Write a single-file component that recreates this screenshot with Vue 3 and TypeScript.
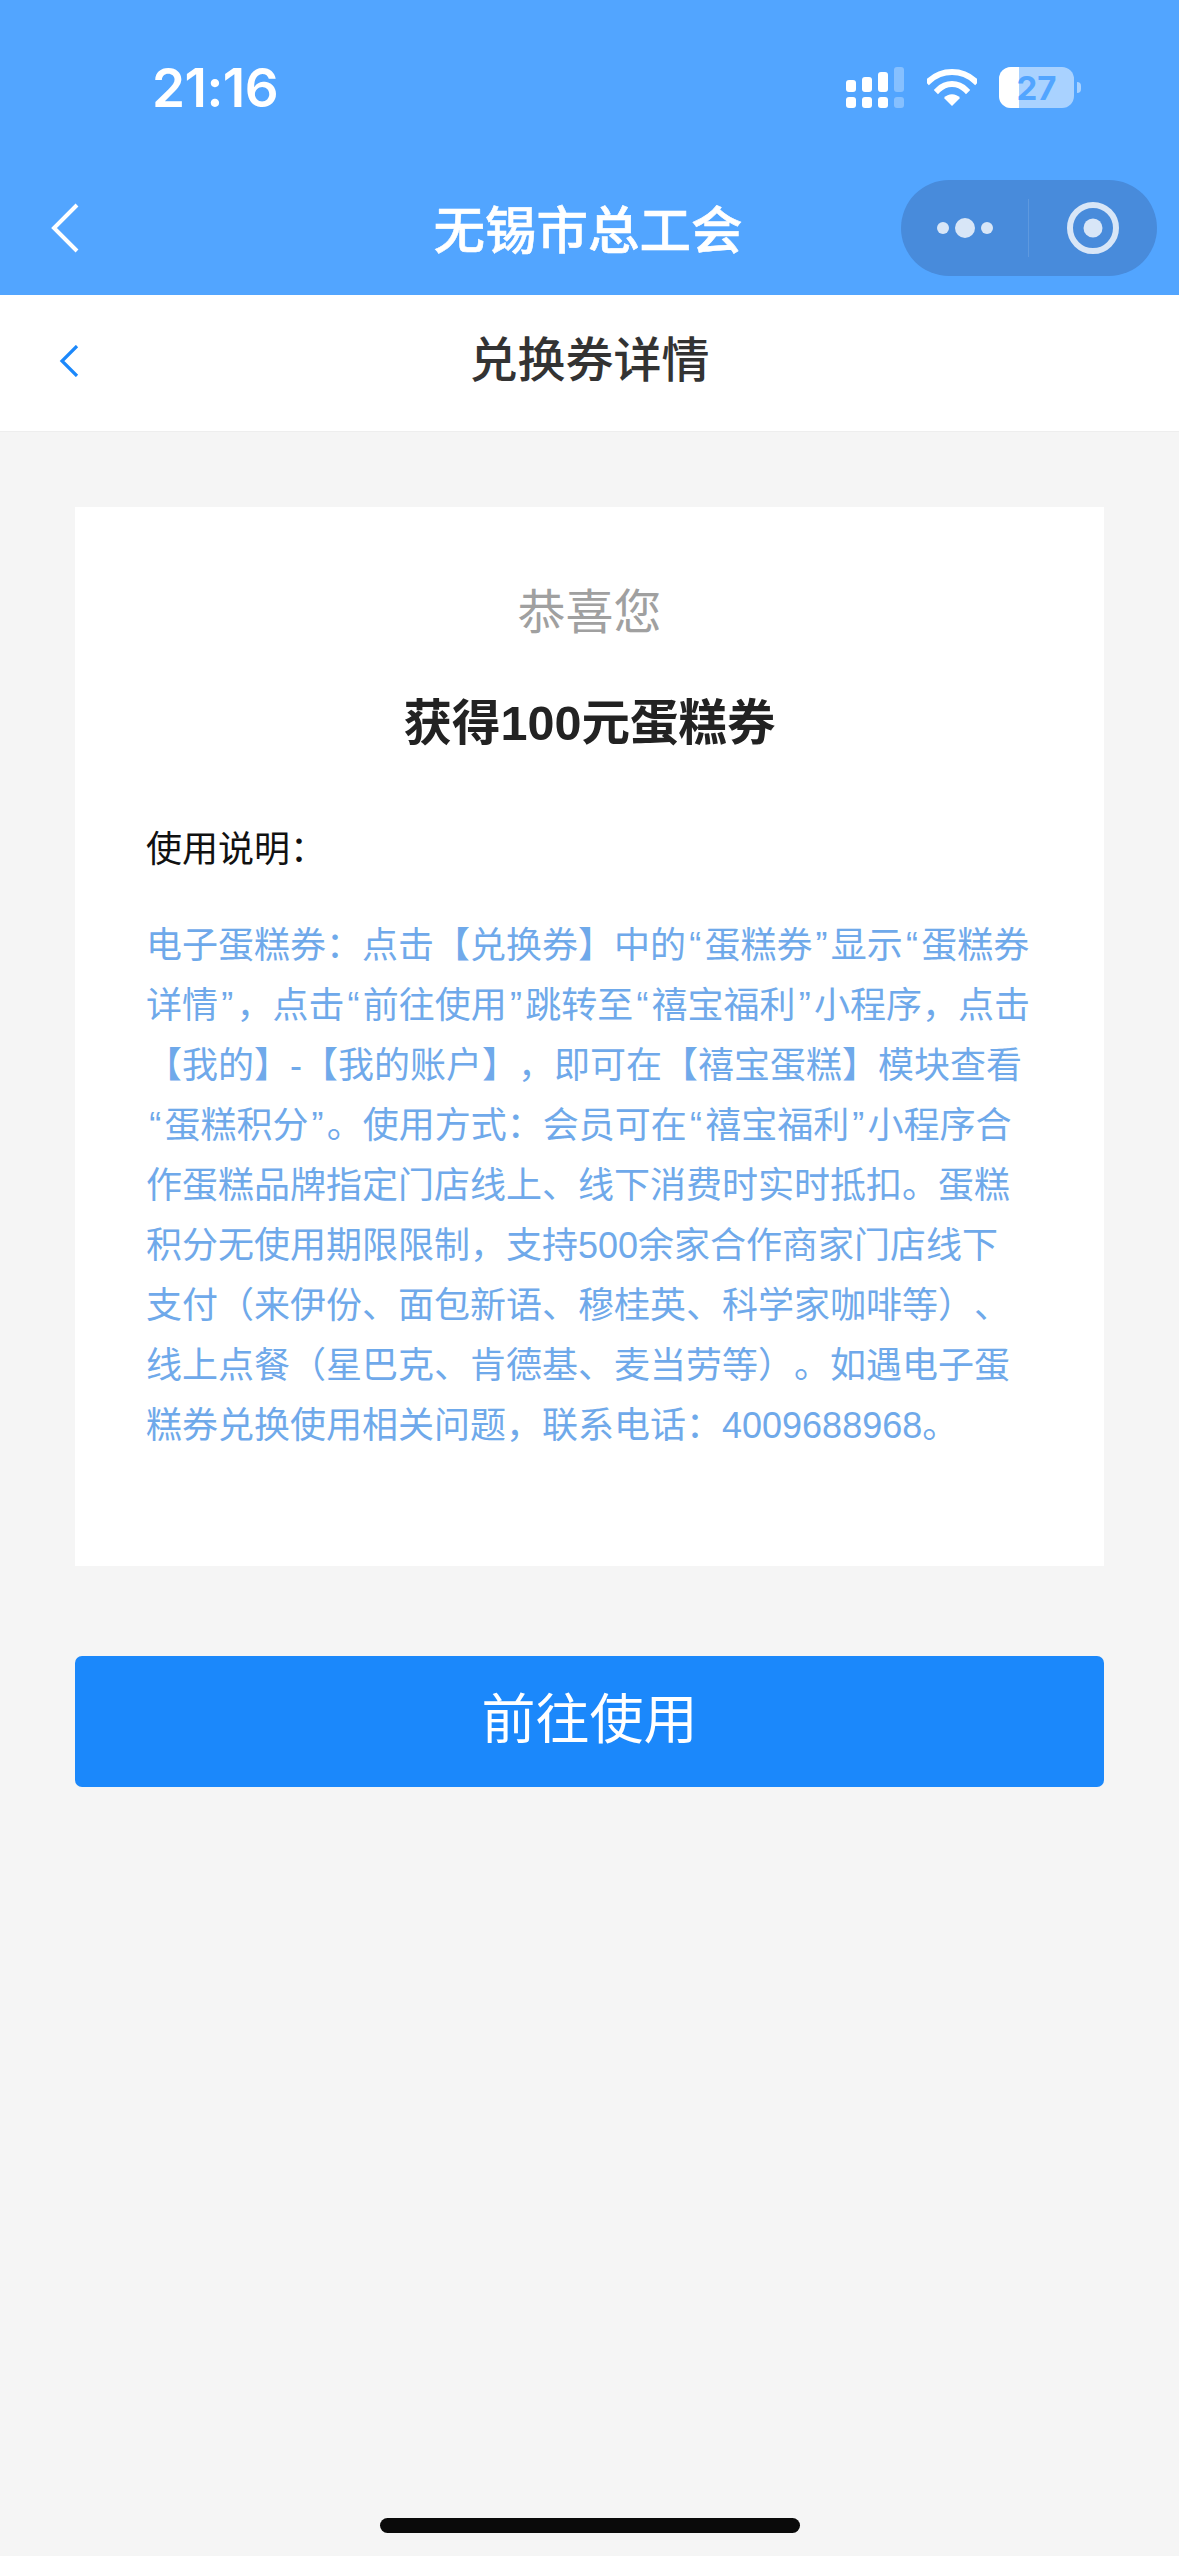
<script setup lang="ts">
const lines: string[] = [
  '电子蛋糕券：点击【兑换券】中的“蛋糕券”显示“蛋糕券',
  '详情”，点击“前往使用”跳转至“禧宝福利”小程序，点击',
  '【我的】-【我的账户】，即可在【禧宝蛋糕】模块查看',
  '“蛋糕积分”。使用方式：会员可在“禧宝福利”小程序合',
  '作蛋糕品牌指定门店线上、线下消费时实时抵扣。蛋糕',
  '积分无使用期限限制，支持500余家合作商家门店线下',
  '支付（来伊份、面包新语、穆桂英、科学家咖啡等）、',
  '线上点餐（星巴克、肯德基、麦当劳等）。如遇电子蛋',
  '糕券兑换使用相关问题，联系电话：4009688968。',
]
const parts = (line: string): string[] => line.split(/([“”])/).filter((p) => p !== '')
const isQuote = (part: string): boolean => part === '“' || part === '”'
</script>

<template>
  <div class="page" lang="zh-CN">
    <header class="top">
      <div class="status">
        <span class="time">21:16</span>
        <div class="status-icons">
          <svg class="signal" width="56" height="41" viewBox="0 0 56 41">
            <g fill="#fff">
              <rect x="0" y="13" width="10" height="12" rx="3" />
              <rect x="16" y="10" width="10" height="15" rx="3" />
              <rect x="32" y="5" width="10" height="20" rx="3" />
              <rect x="0" y="30" width="10" height="11" rx="3" />
              <rect x="16" y="30" width="10" height="11" rx="3" />
              <rect x="32" y="30" width="10" height="11" rx="3" />
            </g>
            <g fill="#fff" opacity="0.3">
              <rect x="48" y="0" width="10" height="25" rx="3" />
              <rect x="48" y="30" width="10" height="11" rx="3" />
            </g>
          </svg>
          <svg class="wifi" width="50" height="37" viewBox="0 0 50 37">
            <path d="M2 12 C15 0 35 0 48 12" fill="none" stroke="#fff" stroke-width="6" stroke-linecap="square" />
            <path d="M11 21 C19 13 31 13 39 21" fill="none" stroke="#fff" stroke-width="6" stroke-linecap="square" />
            <path d="M17 29 C21 24 29 24 33 29 L25 37 Z" fill="#fff" />
          </svg>
          <div class="battery">
            <div class="battery-body">
              <div class="battery-fill"></div>
              <span class="battery-num">27</span>
            </div>
            <div class="battery-tip"></div>
          </div>
        </div>
      </div>
      <div class="nav">
        <svg class="nav-back" width="28" height="50" viewBox="0 0 28 50">
          <path d="M26 2 L3 25 L26 48" fill="none" stroke="#fff" stroke-width="4" />
        </svg>
        <h1 class="nav-title">无锡市总工会</h1>
        <div class="capsule">
          <div class="capsule-more">
            <svg width="58" height="24" viewBox="0 0 58 24">
              <circle cx="6" cy="12" r="6" fill="#d8e6f7" />
              <circle cx="28" cy="12" r="10" fill="#d8e6f7" />
              <circle cx="50" cy="12" r="6" fill="#d8e6f7" />
            </svg>
          </div>
          <div class="capsule-close">
            <svg width="52" height="52" viewBox="0 0 52 52">
              <circle cx="26" cy="26" r="23" fill="none" stroke="#d8e6f7" stroke-width="6" />
              <circle cx="26" cy="26" r="9.5" fill="#d8e6f7" />
            </svg>
          </div>
        </div>
      </div>
    </header>

    <div class="subhead">
      <svg class="sub-back" width="20" height="32" viewBox="0 0 20 32">
        <path d="M18 1 L3 16 L18 31" fill="none" stroke="#1b88fb" stroke-width="3.2" />
      </svg>
      <h2 class="sub-title">兑换券详情</h2>
    </div>

    <main class="content">
      <section class="card">
        <p class="congrats">恭喜您</p>
        <p class="prize">获得100元蛋糕券</p>
        <p class="label">使用说明：</p>
        <div class="desc">
          <div v-for="line in lines" :key="line" class="desc-line">
            <template v-for="(part, i) in parts(line)" :key="i"><span v-if="isQuote(part)" class="quote">{{ part }}</span><template v-else>{{ part }}</template></template>
          </div>
        </div>
      </section>
      <button class="go" type="button"><span class="go-text">前往使用</span></button>
    </main>

    <div class="home"></div>
  </div>
</template>

<style scoped>
.page {
  width: 1179px;
  height: 2556px;
  display: flex;
  flex-direction: column;
  background: #f5f5f5;
  font-family: "Liberation Sans", "Noto Sans CJK SC", sans-serif;
  text-spacing-trim: space-all;
  overflow: hidden;
}
.top {
  height: 295px;
  background: #52a5ff;
  flex: none;
}
.status {
  height: 168px;
  display: flex;
  align-items: flex-start;
  justify-content: space-between;
  padding: 0 98px 0 152px;
  box-sizing: border-box;
}
.time {
  margin-top: 59px;
  font-size: 53px;
  line-height: 58px;
  font-weight: 600;
  color: #fff;
  font-family: "Inter", "Liberation Sans", sans-serif;
  letter-spacing: -0.5px;
}
.status-icons {
  display: flex;
  align-items: flex-start;
  margin-top: 67px;
}
.signal {
  margin-left: -2px;
  overflow: visible;
}
.wifi {
  margin-left: 25px;
  margin-top: 2px;
}
.battery {
  margin-left: 22px;
  display: flex;
  align-items: center;
  height: 41px;
}
.battery-body {
  position: relative;
  width: 75px;
  height: 41px;
  border-radius: 12px;
  background: rgba(255, 255, 255, 0.5);
  overflow: hidden;
  display: flex;
  align-items: center;
  justify-content: center;
}
.battery-fill {
  position: absolute;
  left: 0;
  top: 0;
  bottom: 0;
  width: 20px;
  background: #fff;
}
.battery-num {
  position: relative;
  font-size: 33px;
  font-weight: 700;
  color: #52a5ff;
  font-family: "Inter", "Liberation Sans", sans-serif;
}
.battery-tip {
  width: 4px;
  height: 11px;
  margin-left: 3px;
  border-radius: 0 4px 4px 0;
  background: rgba(255, 255, 255, 0.5);
}
.nav {
  position: relative;
  height: 127px;
  display: flex;
  align-items: flex-start;
}
.nav-back {
  margin: 35px 0 0 51px;
  flex: none;
}
.nav-title {
  position: absolute;
  left: 0;
  right: 3px;
  top: 33px;
  margin: 0;
  text-align: center;
  font-size: 51.5px;
  line-height: 60px;
  font-weight: 500;
  color: #fff;
  -webkit-text-stroke: 0.6px #fff;
}
.capsule {
  margin: 12px 22px 0 auto;
  width: 256px;
  height: 96px;
  border-radius: 48px;
  background: #488bdb;
  display: flex;
  align-items: center;
  box-sizing: border-box;
}
.capsule-more {
  width: 128px;
  height: 58px;
  display: flex;
  align-items: center;
  justify-content: center;
  padding-left: 2px;
  border-right: 1px solid rgba(255, 255, 255, 0.12);
  box-sizing: border-box;
}
.capsule-close {
  flex: 1;
  display: flex;
  align-items: center;
  justify-content: center;
}
.subhead {
  position: relative;
  height: 137px;
  flex: none;
  display: flex;
  align-items: center;
  background: #fff;
  border-bottom: 1px solid #eeeeee;
  box-sizing: border-box;
}
.sub-back {
  margin-left: 59px;
  margin-top: -4px;
}
.sub-title {
  position: absolute;
  left: 0;
  right: 0;
  top: 36px;
  margin: 0;
  text-align: center;
  font-size: 48px;
  line-height: 60px;
  font-weight: 500;
  color: #333;
}
.content {
  padding: 75px 75px 0;
  display: flex;
  flex-direction: column;
}
.card {
  height: 1059px;
  box-sizing: border-box;
  background: #fff;
  padding: 73px 71px 0;
}
.card p {
  margin: 0;
}
.congrats {
  text-align: center;
  font-size: 48px;
  line-height: 66px;
  color: #a0a0a0;
}
.prize {
  margin-top: 44px !important;
  text-align: center;
  font-size: 48.5px;
  line-height: 66px;
  font-weight: 700;
  color: #222;
}
.label {
  margin-top: 69px !important;
  font-size: 36px;
  line-height: 50px;
  color: #111;
}
.desc {
  margin-top: 41px;
  font-size: 36px;
  line-height: 60px;
  color: #6fa9ea;
}
.desc-line {
  white-space: nowrap;
}
.quote {
  padding: 0 3.2px;
}
.go {
  margin-top: 90px;
  height: 131px;
  border: 0;
  border-radius: 7px;
  background: #1b88fb;
  color: #fff;
  font-family: inherit;
  font-size: 54px;
  font-weight: 400;
  padding: 0 0 12px;
}
.home {
  margin: auto auto 23px;
  width: 420px;
  height: 15px;
  border-radius: 8px;
  background: #0a0a0a;
}
</style>
